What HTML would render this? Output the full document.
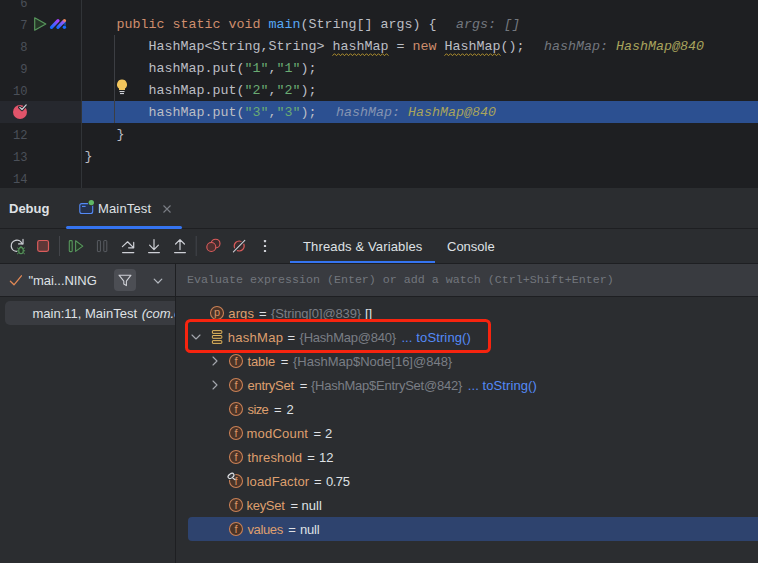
<!DOCTYPE html>
<html><head><meta charset="utf-8">
<style>
html,body{margin:0;padding:0;}
body{width:758px;height:563px;overflow:hidden;background:#2b2d30;position:relative;font-family:"Liberation Sans",sans-serif;font-size:13px;color:#dfe1e5;}
.abs{position:absolute;}
#editor{left:0;top:0;width:758px;height:188px;background:#1e1f22;}
.ln{position:absolute;left:0;width:27.5px;text-align:right;font-family:"Liberation Mono",monospace;font-size:13.6px;transform:translateY(0.2px) scaleX(0.89);transform-origin:100% 50%;color:#4b5059;height:22px;line-height:22px;}
.code{position:absolute;left:84.5px;height:22px;line-height:22px;font-family:"Liberation Mono",monospace;font-size:13.333px;color:#bcbec4;white-space:pre;}
.k{color:#cf8e6d}.s{color:#6aab73}.m{color:#56a8f5}
.h{color:#73777e;font-style:italic;margin-left:19.5px}.hv{color:#a9a45c;font-style:italic}
.wv{}
.ui{position:absolute;white-space:pre;line-height:16px;height:16px;}
.row{position:absolute;height:16px;line-height:16px;white-space:pre;color:#dfe1e5}
.n{color:#de9f6e}.g{color:#7a7e85}.l{color:#548af7}
</style></head><body>
<div id="editor" class="abs">
  <div class="abs" style="left:0;top:101px;width:81px;height:22px;background:#26282e"></div>
  <div class="abs" style="left:82px;top:101px;width:676px;height:22px;background:#2c5091"></div>
  <div class="abs" style="left:81px;top:0;width:1px;height:188px;background:#313438"></div>
  <div class="abs" style="left:114px;top:35px;width:1px;height:88px;background:#3c3e43"></div>
  <div class="ln" style="top:-7.5px">6</div>
  <div class="ln" style="top:14.5px">7</div>
  <div class="ln" style="top:36.5px">8</div>
  <div class="ln" style="top:58.5px">9</div>
  <div class="ln" style="top:80.5px">10</div>
  <div class="ln" style="top:124.5px">12</div>
  <div class="ln" style="top:146.5px">13</div>
  <div class="ln" style="top:168.5px">14</div>
  <div class="code" style="top:14.0px">    <span class="k">public static void</span> <span class="m">main</span>(String[] args) {<span class="h">args: []</span></div>
  <div class="code" style="top:36.0px">        HashMap&lt;String,String&gt; <span class="wv">hashMap</span> = <span class="k">new</span> <span class="wv">HashMap</span>();<span class="h">hashMap: </span><span class="hv">HashMap@840</span></div>
  <div class="code" style="top:58.0px">        hashMap.put(<span class="s">"1"</span>,<span class="s">"1"</span>);</div>
  <div class="code" style="top:80.0px">        hashMap.put(<span class="s">"2"</span>,<span class="s">"2"</span>);</div>
  <div class="code" style="top:102.0px">        hashMap.put(<span class="s">"3"</span>,<span class="s">"3"</span>);<span class="h" style="color:#8594b2">hashMap: </span><span class="hv">HashMap@840</span></div>
  <div class="code" style="top:124.0px">    }</div>
  <div class="code" style="top:146.0px">}</div>
<svg class="abs" style="left:0;top:0" width="758" height="70" fill="none"><polyline points="332.5,55.7 334.5,53.7 336.5,55.7 338.5,53.7 340.5,55.7 342.5,53.7 344.5,55.7 346.5,53.7 348.5,55.7 350.5,53.7 352.5,55.7 354.5,53.7 356.5,55.7 358.5,53.7 360.5,55.7 362.5,53.7 364.5,55.7 366.5,53.7 368.5,55.7 370.5,53.7 372.5,55.7 374.5,53.7 376.5,55.7 378.5,53.7 380.5,55.7 382.5,53.7 384.5,55.7 386.5,53.7 388.5,55.7" stroke="#b3922e" stroke-width="1"/></svg><svg class="abs" style="left:0;top:0" width="758" height="70" fill="none"><polyline points="444.5,55.7 446.5,53.7 448.5,55.7 450.5,53.7 452.5,55.7 454.5,53.7 456.5,55.7 458.5,53.7 460.5,55.7 462.5,53.7 464.5,55.7 466.5,53.7 468.5,55.7 470.5,53.7 472.5,55.7 474.5,53.7 476.5,55.7 478.5,53.7 480.5,55.7 482.5,53.7 484.5,55.7 486.5,53.7 488.5,55.7 490.5,53.7 492.5,55.7 494.5,53.7 496.5,55.7 498.5,53.7 500.5,55.7" stroke="#b3922e" stroke-width="1"/></svg>
  <!-- gutter icons -->
  <svg class="abs" style="left:30px;top:14px" width="40" height="20" viewBox="30 14 40 20" fill="none"><defs><linearGradient id="lg1" x1="51.4" y1="27.4" x2="58.1" y2="20.6" gradientUnits="userSpaceOnUse"><stop offset="0" stop-color="#1769ff"/><stop offset="0.5" stop-color="#5a5cff"/><stop offset="1" stop-color="#a53dff"/></linearGradient><linearGradient id="lg2" x1="57.8" y1="27.4" x2="64.8" y2="20.2" gradientUnits="userSpaceOnUse"><stop offset="0" stop-color="#1769ff"/><stop offset="0.45" stop-color="#6a5cff"/><stop offset="0.8" stop-color="#9a58f0"/><stop offset="0.9" stop-color="#e8826a"/><stop offset="1" stop-color="#f08a5c"/></linearGradient></defs>
<path d="M34.7 17.8 L45.8 24 L34.7 30.2 Z" fill="#253627" stroke="#57965c" stroke-width="1.2" stroke-linejoin="round"/>
<path d="M62.6 23.5 L65.9 20.6 V26 Z" fill="#0d4a9e"/>
<path d="M51.5 27.3 L58 20.7" stroke="url(#lg1)" stroke-width="3.2" stroke-linecap="round"/>
<path d="M57.9 27.3 L64.5 20.6" stroke="url(#lg2)" stroke-width="3.2" stroke-linecap="round"/>
<circle cx="64.4" cy="27.3" r="1.7" fill="#1769ff"/></svg>
  <svg class="abs" style="left:12px;top:103px" width="18" height="18" viewBox="0 0 18 18"><circle cx="8" cy="9" r="7" fill="#e1546a"/><path d="M7.6 4.4 L10 6.7 L14.4 1.8" fill="none" stroke="#26282e" stroke-width="3" stroke-linecap="round" stroke-linejoin="round"/><path d="M7.8 4.4 L10 6.5 L14.2 1.9" fill="none" stroke="#ced0d6" stroke-width="1.2" stroke-linecap="round" stroke-linejoin="round"/></svg>
  <svg class="abs" style="left:115px;top:78px" width="14" height="18" viewBox="0 0 14 18"><path d="M7 1.5 A5 5 0 0 0 4 10.5 L4 12 L10 12 L10 10.5 A5 5 0 0 0 7 1.5 Z" fill="#f2c55c"/><rect x="4.5" y="13" width="5" height="1.1" fill="#ced0d6"/><rect x="5" y="15" width="4" height="1.1" fill="#ced0d6"/></svg>
</div>

<!-- panel header -->
<div class="ui" style="left:9px;top:201px;font-weight:bold;color:#dfe1e5">Debug</div>
<svg class="abs" style="left:78px;top:198px" width="18" height="18" viewBox="78 198 18 18"><rect x="79.8" y="203.6" width="12.9" height="9.9" rx="2" fill="#25324d" stroke="#548af7" stroke-width="1.1"/><path d="M82 206.4 H85.6" stroke="#548af7" stroke-width="1.1"/><circle cx="91.3" cy="202.6" r="3.5" fill="#2b2d30"/><circle cx="91.3" cy="202.6" r="2.7" fill="#5fb865"/></svg>
<div class="ui" style="left:98px;top:201px;letter-spacing:0.15px">MainTest</div>
<svg class="abs" style="left:161px;top:203px" width="12" height="12" viewBox="0 0 12 12"><path d="M2.5 2.5 L9.5 9.5 M9.5 2.5 L2.5 9.5" stroke="#7a7e85" stroke-width="1.1" fill="none"/></svg>
<div class="abs" style="left:0;top:228px;width:758px;height:1px;background:#1e1f22"></div>
<div class="abs" style="left:66px;top:226px;width:116px;height:3px;background:#3574f0;border-radius:1.5px"></div>

<!-- toolbar -->
<svg class="abs" style="left:0;top:230px" width="290" height="34" viewBox="0 230 290 34" fill="none">
<!-- rerun debug -->
<path d="M22.1 243.9 A5.6 5.6 0 1 0 17 251.4" stroke="#ced0d6" stroke-width="1.3" stroke-linecap="round"/>
<path d="M18.6 243.9 H23 V239.4" stroke="#ced0d6" stroke-width="1.2" stroke-linecap="round" stroke-linejoin="round"/>
<rect x="17.4" y="245.6" width="7.4" height="9.6" rx="3.6" fill="#2b2d30"/>
<ellipse cx="21" cy="250.6" rx="2.3" ry="3.1" fill="#233325" stroke="#57965c" stroke-width="1.1"/>
<path d="M19.6 247.6 A1.5 1.4 0 0 1 22.4 247.6 M17.2 247.8 L18.9 249 M24.8 247.8 L23.1 249 M16.9 250.8 H18.6 M25.1 250.8 H23.4 M17.2 254 L18.9 252.6 M24.8 254 L23.1 252.6" stroke="#57965c" stroke-width="1"/>
<!-- stop -->
<rect x="37.7" y="240.5" width="10.8" height="10.9" rx="1.8" fill="#5e3838" stroke="#db5c5c" stroke-width="1.2"/>
<path d="M59.5 236 V256" stroke="#43454a" stroke-width="1"/>
<!-- resume -->
<rect x="69.3" y="240.6" width="2.9" height="11" rx="0.8" fill="#253627" stroke="#57965c" stroke-width="1.1"/>
<path d="M75.6 240.8 L82.8 246.1 L75.6 251.4 Z" fill="#253627" stroke="#57965c" stroke-width="1.1" stroke-linejoin="round"/>
<!-- pause (disabled) -->
<rect x="97.4" y="240.6" width="3" height="11" rx="0.5" stroke="#5a5d63" stroke-width="1"/>
<rect x="103.8" y="240.6" width="3" height="11" rx="0.5" stroke="#5a5d63" stroke-width="1"/>
<!-- step over -->
<path d="M122.4 246.6 L127.6 241.8 L133.5 247.6 M133.7 242.4 V247.8 H128.6" stroke="#ced0d6" stroke-width="1.2" stroke-linecap="round" stroke-linejoin="round"/>
<path d="M122.6 252.6 H133.8" stroke="#ced0d6" stroke-width="1.2" stroke-linecap="round"/>
<!-- step into -->
<path d="M154 239.6 V249.4 M149.6 245.2 L154 249.6 L158.4 245.2" stroke="#ced0d6" stroke-width="1.2" stroke-linecap="round" stroke-linejoin="round"/>
<path d="M148.6 252.6 H159.4" stroke="#ced0d6" stroke-width="1.2" stroke-linecap="round"/>
<!-- step out -->
<path d="M180 249.6 V239.8 M175.6 244 L180 239.6 L184.4 244" stroke="#ced0d6" stroke-width="1.2" stroke-linecap="round" stroke-linejoin="round"/>
<path d="M174.6 252.6 H185.4" stroke="#ced0d6" stroke-width="1.2" stroke-linecap="round"/>
<path d="M196.2 236 V256" stroke="#43454a" stroke-width="1"/>
<!-- view breakpoints -->
<circle cx="215.6" cy="243.6" r="4.4" fill="#3f2b2c" stroke="#db5c5c" stroke-width="1.1"/>
<circle cx="211.3" cy="247" r="4.5" fill="#4f2f2f" stroke="#db5c5c" stroke-width="1.1"/>
<!-- mute -->
<circle cx="239.2" cy="246" r="5" fill="#3f2b2c" stroke="#db5c5c" stroke-width="1.2"/>
<path d="M233.6 251.6 L244.8 240.4" stroke="#2b2d30" stroke-width="3.2"/>
<path d="M233.4 251.8 L244.8 240.4" stroke="#ced0d6" stroke-width="1.1" stroke-linecap="round"/>
<!-- more -->
<rect x="263.9" y="240" width="2.2" height="2.2" rx="0.4" fill="#ced0d6"/><rect x="263.9" y="244.9" width="2.2" height="2.2" rx="0.4" fill="#ced0d6"/><rect x="263.9" y="249.9" width="2.2" height="2.2" rx="0.4" fill="#ced0d6"/>
</svg>
<div class="ui" style="left:303px;top:239px;letter-spacing:0.14px">Threads &amp; Variables</div>
<div class="ui" style="left:447px;top:239px">Console</div>
<div class="abs" style="left:290.4px;top:260.7px;width:144.6px;height:2.8px;background:#3574f0"></div>
<div class="abs" style="left:0;top:263px;width:758px;height:1px;background:#1e1f22"></div>

<!-- thread / eval row -->
<div class="abs" style="left:0;top:264px;width:758px;height:32px;background:#393b40"></div>
<div class="abs" style="left:0;top:296px;width:758px;height:1px;background:#1e1f22"></div>
<div class="abs" style="left:175px;top:264px;width:1px;height:299px;background:#1e1f22"></div>
<div class="abs" style="left:0;top:264px;width:175px;height:299px;overflow:hidden">
<svg class="abs" style="left:8px;top:8px" width="16" height="16" viewBox="8 272 16 16" fill="none"><path d="M10.4 281.2 L14 284.8 L21.4 275.8" stroke="#e08855" stroke-width="1.3" stroke-linecap="round" stroke-linejoin="round"/></svg>
<div class="ui" style="left:28.5px;top:8.5px;letter-spacing:-0.06px">"mai...NING</div>
<div class="abs" style="left:114px;top:5px;width:22px;height:22px;border-radius:4px;background:#4c4e54"></div>
<svg class="abs" style="left:117px;top:8px" width="16" height="16" viewBox="117 272 16 16" fill="none"><path d="M119 275.2 H131 L126.4 281.2 V285.6 L123.8 284 V281.2 Z" stroke="#ced0d6" stroke-width="1.1" stroke-linejoin="round"/></svg>
<svg class="abs" style="left:150px;top:9px" width="16" height="16" viewBox="150 273 16 16" fill="none"><path d="M154.2 279.2 L158 283 L161.8 279.2" stroke="#b4b8bf" stroke-width="1.2" stroke-linecap="round" stroke-linejoin="round"/></svg>
<!-- frames -->
<div class="abs" style="left:5px;top:37px;width:175px;height:24px;background:#393b40;border-radius:5px"></div>
<div class="ui" style="left:32.5px;top:42px">main:11, MainTest <i style="margin-left:1px">(com.c</i></div>
</div>
<div class="ui" style="left:187px;top:272px;font-family:'Liberation Mono',monospace;font-size:11.67px;color:#72767d">Evaluate expression (Enter) or add a watch (Ctrl+Shift+Enter)</div>

<!-- variables -->
<div class="abs" style="left:188px;top:517px;width:570px;height:24px;background:#2e436e;border-radius:4px 0 0 4px"></div>
<svg class="abs" style="left:209.0px;top:304.8px" width="16" height="16" viewBox="0 0 16 16"><circle cx="8" cy="8" r="6.5" fill="#4a3327" stroke="#c98056" stroke-width="1.1"/><text x="8" y="10.5" text-anchor="middle" font-family="Liberation Sans, sans-serif" font-size="11" fill="#d89466">p</text></svg>
<svg class="abs" style="left:188.0px;top:329.0px" width="16" height="16" viewBox="0 0 16 16"><path d="M4 6 L8 10 L12 6" fill="none" stroke="#a4a7ae" stroke-width="1.1" stroke-linecap="round" stroke-linejoin="round"/></svg>
<svg class="abs" style="left:209px;top:329px" width="16" height="16" viewBox="0 0 16 16" fill="#3b3126" stroke="#e0b65e" stroke-width="1"><rect x="3.4" y="1.6" width="9.4" height="2.8" rx="0.4"/><rect x="3.4" y="6.5" width="9.4" height="2.8" rx="0.4"/><rect x="3.4" y="11.6" width="9.4" height="2.8" rx="0.4"/></svg>
<svg class="abs" style="left:207.0px;top:353.0px" width="16" height="16" viewBox="0 0 16 16"><path d="M6 4 L10 8 L6 12" fill="none" stroke="#a4a7ae" stroke-width="1.1" stroke-linecap="round" stroke-linejoin="round"/></svg>
<svg class="abs" style="left:228.0px;top:352.8px" width="16" height="16" viewBox="0 0 16 16"><circle cx="8" cy="8" r="6.5" fill="#4a3327" stroke="#c98056" stroke-width="1.1"/><text x="8" y="11.7" text-anchor="middle" font-family="Liberation Sans, sans-serif" font-size="11" fill="#d89466">f</text></svg>
<svg class="abs" style="left:207.0px;top:377.0px" width="16" height="16" viewBox="0 0 16 16"><path d="M6 4 L10 8 L6 12" fill="none" stroke="#a4a7ae" stroke-width="1.1" stroke-linecap="round" stroke-linejoin="round"/></svg>
<svg class="abs" style="left:228.0px;top:376.8px" width="16" height="16" viewBox="0 0 16 16"><circle cx="8" cy="8" r="6.5" fill="#4a3327" stroke="#c98056" stroke-width="1.1"/><text x="8" y="11.7" text-anchor="middle" font-family="Liberation Sans, sans-serif" font-size="11" fill="#d89466">f</text></svg>
<svg class="abs" style="left:228.0px;top:400.8px" width="16" height="16" viewBox="0 0 16 16"><circle cx="8" cy="8" r="6.5" fill="#4a3327" stroke="#c98056" stroke-width="1.1"/><text x="8" y="11.7" text-anchor="middle" font-family="Liberation Sans, sans-serif" font-size="11" fill="#d89466">f</text></svg>
<svg class="abs" style="left:228.0px;top:424.8px" width="16" height="16" viewBox="0 0 16 16"><circle cx="8" cy="8" r="6.5" fill="#4a3327" stroke="#c98056" stroke-width="1.1"/><text x="8" y="11.7" text-anchor="middle" font-family="Liberation Sans, sans-serif" font-size="11" fill="#d89466">f</text></svg>
<svg class="abs" style="left:228.0px;top:448.8px" width="16" height="16" viewBox="0 0 16 16"><circle cx="8" cy="8" r="6.5" fill="#4a3327" stroke="#c98056" stroke-width="1.1"/><text x="8" y="11.7" text-anchor="middle" font-family="Liberation Sans, sans-serif" font-size="11" fill="#d89466">f</text></svg>
<svg class="abs" style="left:228.0px;top:472.8px" width="16" height="16" viewBox="0 0 16 16"><circle cx="8" cy="8" r="6.5" fill="#4a3327" stroke="#c98056" stroke-width="1.1"/><text x="8" y="11.7" text-anchor="middle" font-family="Liberation Sans, sans-serif" font-size="11" fill="#d89466">f</text></svg>
<svg class="abs" style="left:228.0px;top:496.8px" width="16" height="16" viewBox="0 0 16 16"><circle cx="8" cy="8" r="6.5" fill="#4a3327" stroke="#c98056" stroke-width="1.1"/><text x="8" y="11.7" text-anchor="middle" font-family="Liberation Sans, sans-serif" font-size="11" fill="#d89466">f</text></svg>
<svg class="abs" style="left:228.0px;top:520.8px" width="16" height="16" viewBox="0 0 16 16"><circle cx="8" cy="8" r="6.5" fill="#4a3327" stroke="#c98056" stroke-width="1.1"/><text x="8" y="11.7" text-anchor="middle" font-family="Liberation Sans, sans-serif" font-size="11" fill="#d89466">f</text></svg>
<svg class="abs" style="left:224px;top:469px" width="16" height="16" viewBox="224 469 16 16" fill="none"><g transform="rotate(-35 231 475.9)"><ellipse cx="231" cy="475.9" rx="3.3" ry="2.1" stroke="#2b2d30" stroke-width="2.6"/><ellipse cx="231" cy="475.9" rx="3.3" ry="2.1" fill="#3a3c40" stroke="#dfe1e5" stroke-width="1.1"/></g><path d="M233 478.3 L234.8 479.6" stroke="#dfe1e5" stroke-width="1.2" stroke-linecap="round"/></svg>
<div class="row n" style="left:228.3px;top:306.0px;letter-spacing:0.1px">args</div>
<div class="row" style="left:259px;top:306.0px">=</div>
<div class="row g" style="left:271px;top:306.0px;letter-spacing:-0.13px">{String[0]@839}</div>
<div class="row" style="left:365px;top:306.0px">[]</div>
<div class="row n" style="left:227.8px;top:330.0px;letter-spacing:0.27px">hashMap</div>
<div class="row" style="left:287.6px;top:330.0px">=</div>
<div class="row g" style="left:299.5px;top:330.0px;letter-spacing:-0.21px">{HashMap@840}</div>
<div class="row l" style="left:401.4px;top:330.0px;letter-spacing:0.12px">... toString()</div>
<div class="row n" style="left:247.5px;top:354.0px;letter-spacing:-0.12px">table</div>
<div class="row" style="left:280.7px;top:354.0px">=</div>
<div class="row g" style="left:293px;top:354.0px">{HashMap$Node[16]@848}</div>
<div class="row n" style="left:247.5px;top:378.0px;letter-spacing:-0.27px">entrySet</div>
<div class="row" style="left:299.7px;top:378.0px">=</div>
<div class="row g" style="left:311px;top:378.0px;letter-spacing:-0.24px">{HashMap$EntrySet@842}</div>
<div class="row l" style="left:467.8px;top:378.0px;letter-spacing:0.08px">... toString()</div>
<div class="row n" style="left:247.5px;top:402.0px;letter-spacing:-0.6px">size</div>
<div class="row" style="left:274px;top:402.0px">=</div>
<div class="row" style="left:286.4px;top:402.0px">2</div>
<div class="row n" style="left:246.5px;top:426.0px;letter-spacing:0.21px">modCount</div>
<div class="row" style="left:313.5px;top:426.0px">=</div>
<div class="row" style="left:324.9px;top:426.0px">2</div>
<div class="row n" style="left:247.5px;top:450.0px;letter-spacing:0.14px">threshold</div>
<div class="row" style="left:307.3px;top:450.0px">=</div>
<div class="row" style="left:319px;top:450.0px">12</div>
<div class="row n" style="left:246.5px;top:474.0px;letter-spacing:0.14px">loadFactor</div>
<div class="row" style="left:314px;top:474.0px">=</div>
<div class="row" style="left:325.9px;top:474.0px;letter-spacing:-0.43px">0.75</div>
<div class="row n" style="left:246.5px;top:498.0px;letter-spacing:-0.3px">keySet</div>
<div class="row" style="left:290.4px;top:498.0px">=</div>
<div class="row" style="left:301.6px;top:498.0px">null</div>
<div class="row n sel" style="left:247.5px;top:522.0px;letter-spacing:-0.38px">values</div>
<div class="row" style="left:288.3px;top:522.0px">=</div>
<div class="row" style="left:300px;top:522.0px;letter-spacing:-0.2px">null</div>
<div class="abs" style="left:184.5px;top:319.1px;width:306.4px;height:34px;border:3.3px solid #f7240f;border-radius:5.5px;box-sizing:border-box"></div>
</body></html>
